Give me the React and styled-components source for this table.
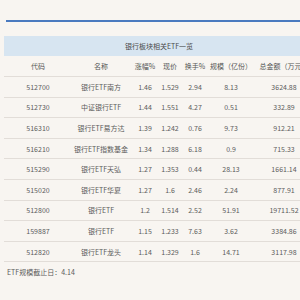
import styled, { createGlobalStyle } from "styled-components";

const GlobalStyle = createGlobalStyle`
  html, body {
    margin: 0;
    padding: 0;
    background: #f8f5f1;
  }
  body {
    font-family: "Noto Sans CJK SC", "Noto Sans", sans-serif;
    color: #5c5c5c;
  }
`;

const Page = styled.div`
  width: 300px;
  height: 300px;
  overflow: hidden;
  padding: 20px 0 0 4px;
  box-sizing: border-box;
`;

const TopRule = styled.div`
  height: 2px;
  margin-left: 2px;
  background: #4a7abf;
`;

const Table = styled.div`
  margin-top: 14px;
  width: 312px;
`;

const Title = styled.div`
  height: 20px;
  background: #d7e5f1;
  display: flex;
  align-items: center;
  justify-content: center;
  font-size: 7px;
  color: #4a4a4a;
  padding-right: 2px;
`;

const Row = styled.div`
  display: grid;
  grid-template-columns: 68px 58px 30px 20px 30px 42px 64px;
  height: ${({ $head }) => ($head ? "21px" : "20.6px")};
  box-sizing: border-box;
  border-bottom: 1px solid #e2ddd8;
`;

const Cell = styled.div`
  display: flex;
  align-items: center;
  justify-content: center;
  white-space: nowrap;
  font-size: 7px;
  color: ${({ $head }) => ($head ? "#555" : "#5c5c5c")};
`;

const Footer = styled.div`
  margin-top: 5px;
  padding-left: 3px;
  font-size: 7px;
  color: #5c5c5c;
`;

const heads = ["代码", "名称", "涨幅%", "现价", "换手%", "规模（亿份）", "总金额（万元）"];

const rows = [
  ["512700", "银行ETF南方", "1.46", "1.529", "2.94", "8.13", "3624.88"],
  ["512730", "中证银行ETF", "1.44", "1.551", "4.27", "0.51", "332.89"],
  ["516310", "银行ETF易方达", "1.39", "1.242", "0.76", "9.73", "912.21"],
  ["516210", "银行ETF指数基金", "1.34", "1.288", "6.18", "0.9", "715.33"],
  ["515290", "银行ETF天弘", "1.27", "1.353", "0.44", "28.13", "1661.14"],
  ["515020", "银行ETF华夏", "1.27", "1.6", "2.46", "2.24", "877.91"],
  ["512800", "银行ETF", "1.2", "1.514", "2.52", "51.91", "19711.52"],
  ["159887", "银行ETF", "1.15", "1.233", "7.63", "3.62", "3384.86"],
  ["512820", "银行ETF龙头", "1.14", "1.329", "1.6", "14.71", "3117.98"],
];

export default function App() {
  return (
    <>
      <GlobalStyle />
      <Page>
        <TopRule />
        <Table>
          <Title>银行板块相关ETF一览</Title>
          <Row $head>
            {heads.map((h) => (
              <Cell $head key={h}>{h}</Cell>
            ))}
          </Row>
          {rows.map((r) => (
            <Row key={r[0]}>
              {r.map((v, i) => (
                <Cell key={i}>{v}</Cell>
              ))}
            </Row>
          ))}
        </Table>
        <Footer>ETF规模截止日：4.14</Footer>
      </Page>
    </>
  );
}
